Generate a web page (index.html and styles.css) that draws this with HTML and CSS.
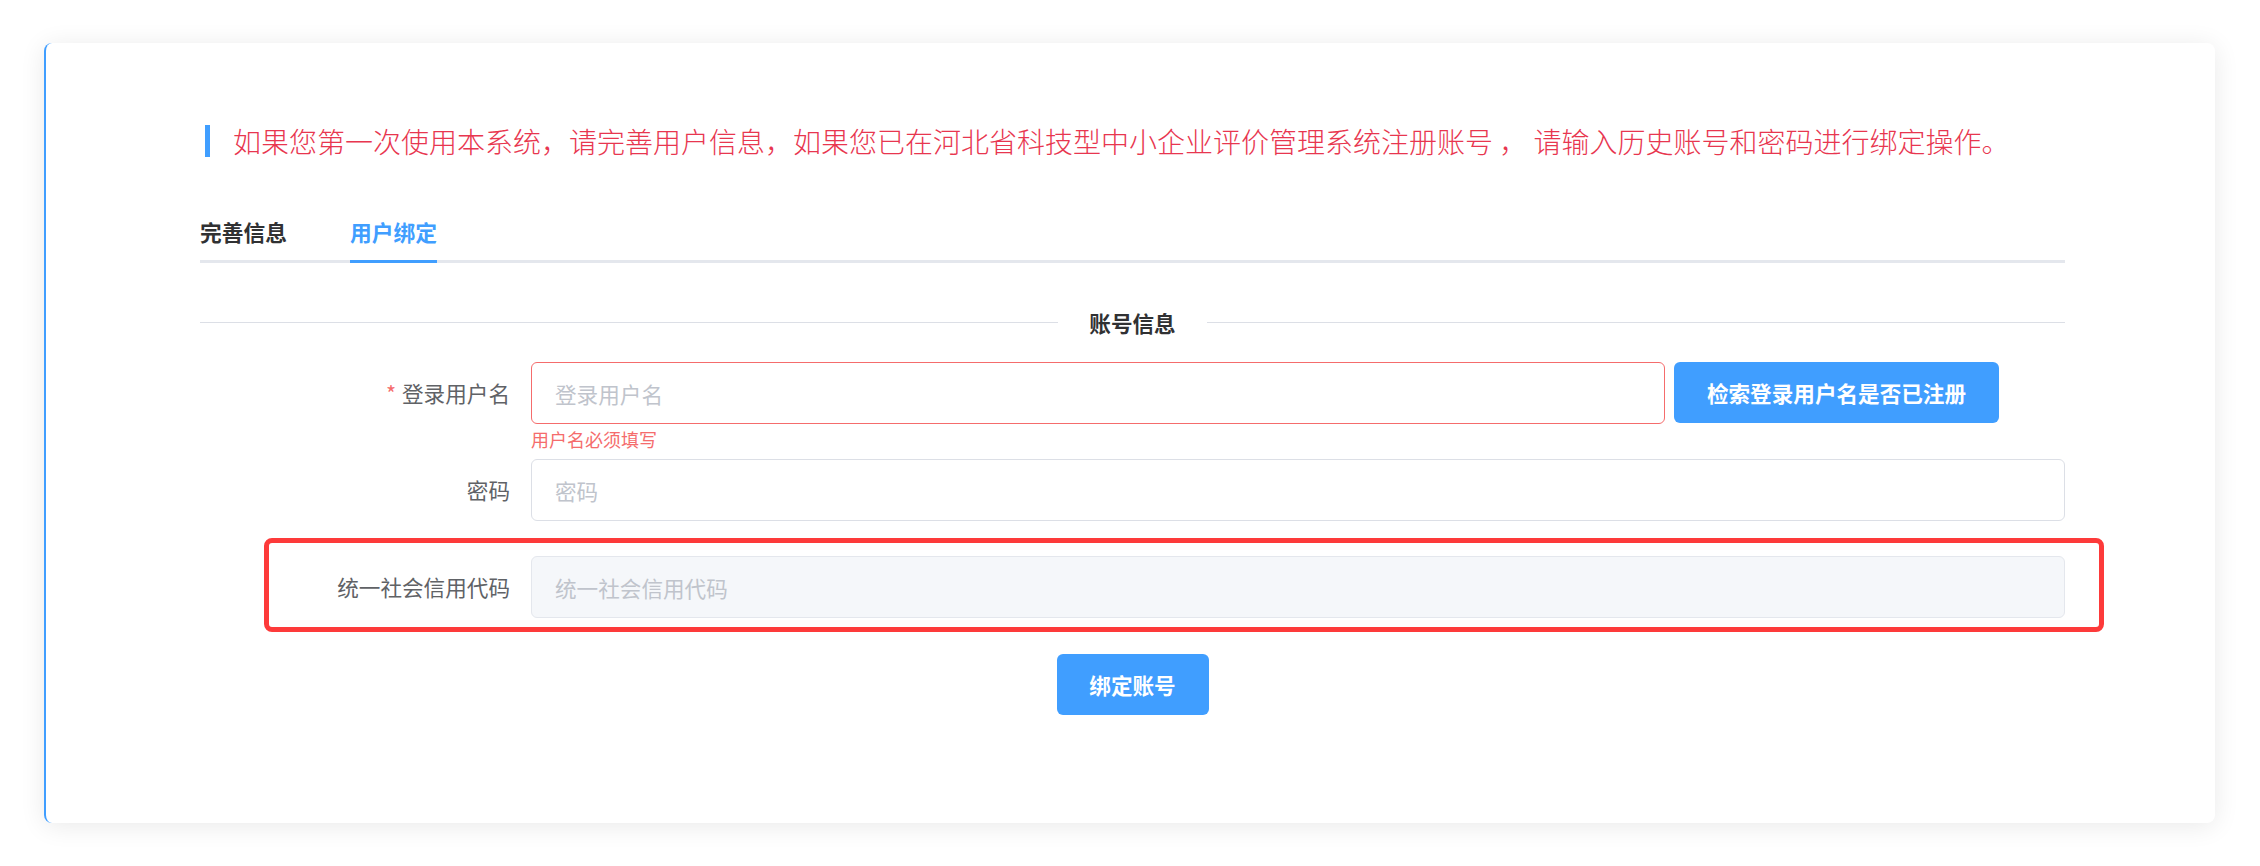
FILE: index.html
```html
<!DOCTYPE html>
<html lang="zh-CN">
<head>
<meta charset="utf-8">
<title>用户绑定</title>
<link rel="stylesheet" href="styles.css">
</head>
<body>
<div class="page">
  <div class="card">
    <div class="notice">
      <span class="notice-bar"></span>
      <span class="notice-text">如果您第一次使用本系统，请完善用户信息，如果您已在河北省科技型中小企业评价管理系统注册账号 ， 请输入历史账号和密码进行绑定操作。</span>
    </div>

    <div class="tabs">
      <div class="tab">完善信息</div>
      <div class="tab active">用户绑定</div>
    </div>

    <div class="divider"><span class="divider-text">账号信息</span></div>

    <form class="form">
      <div class="row row-first">
        <label class="label"><span class="req">*</span>登录用户名</label>
        <div class="content content-with-btn">
          <div class="field">
            <input class="input input-error" placeholder="登录用户名">
            <div class="error">用户名必须填写</div>
          </div>
          <button type="button" class="btn btn-search">检索登录用户名是否已注册</button>
        </div>
      </div>
      <div class="row">
        <label class="label">密码</label>
        <div class="content">
          <input class="input" type="password" placeholder="密码">
        </div>
      </div>
      <div class="row row-highlight">
        <label class="label">统一社会信用代码</label>
        <div class="content">
          <input class="input input-disabled" placeholder="统一社会信用代码" disabled>
        </div>
      </div>
      <div class="actions">
        <button type="button" class="btn btn-bind">绑定账号</button>
      </div>
    </form>
  </div>
</div>
</body>
</html>
```
FILE: styles.css
```css
html, body {
  margin: 0;
  padding: 0;
  background: #ffffff;
}

body {
  font-family: "Noto Sans CJK SC", "Noto Sans", "Liberation Sans", sans-serif;
  color: #303133;
}

.page {
  padding: 43px 45px 43px 44px;
}

.card {
  background: #ffffff;
  border-left: 2px solid #409eff;
  border-radius: 8px;
  box-shadow: 0 3px 26px rgba(0, 0, 0, 0.09);
  padding: 82px 150px 108px 154px;
  height: 780px;
  box-sizing: border-box;
}

/* notice */
.notice {
  display: flex;
  align-items: center;
  height: 32px;
  padding-left: 5px;
}

.notice-bar {
  width: 5px;
  height: 32px;
  background: #409eff;
  flex: none;
}

.notice-text {
  margin-left: 23px;
  font-family: "Noto Sans CJK SC Light", "Noto Sans CJK SC DemiLight", "Noto Sans CJK SC", sans-serif;
  font-size: 28px;
  font-weight: 300;
  line-height: 32px;
  color: #e8364f;
  white-space: nowrap;
}

/* tabs */
.tabs {
  margin-top: 46px;
  display: flex;
  border-bottom: 3px solid #e4e7ed;
  height: 57px;
}

.tab {
  font-size: 21.75px;
  font-weight: 700;
  line-height: 57px;
  height: 57px;
  color: #303133;
  margin-right: 63px;
  border-bottom: 3px solid transparent;
}

.tab.active {
  color: #409eff;
  border-bottom-color: #409eff;
}

/* divider */
.divider {
  margin-top: 59px;
  height: 1px;
  background: #dcdfe6;
  display: flex;
  justify-content: center;
  align-items: center;
}

.divider-text {
  background: #ffffff;
  padding: 0 31px;
  font-size: 21.6px;
  font-weight: 700;
  color: #303133;
  line-height: 30px;
}

/* form */
.form {
  margin-top: 39px;
}

.row {
  display: flex;
  margin-bottom: 35px;
}

.label {
  width: 331px;
  flex: none;
  box-sizing: border-box;
  padding-right: 21px;
  text-align: right;
  font-size: 21.6px;
  line-height: 62px;
  color: #606266;
}

.req {
  color: #f56c6c;
  margin-right: 6px;
}

.content {
  flex: 1;
  display: flex;
}

.content-with-btn {
  padding-right: 66px;
  gap: 9px;
}

.field {
  flex: 1;
  position: relative;
  display: flex;
}

.input {
  flex: 1;
  width: 100%;
  height: 62px;
  box-sizing: border-box;
  border: 1.5px solid #dcdfe6;
  border-radius: 6px;
  padding: 0 23px;
  font-family: "Noto Sans CJK SC", "Noto Sans", sans-serif;
  font-size: 21.6px;
  color: #606266;
  background: #ffffff;
  outline: none;
}

.input::placeholder {
  color: #c0c4cc;
}

.input-error {
  border-color: #f56c6c;
}

.input-disabled {
  background: #f5f7fa;
  border-color: #e4e7ed;
}

.error {
  position: absolute;
  left: 0;
  top: 100%;
  padding-top: 5px;
  font-size: 18px;
  line-height: 20px;
  color: #f56c6c;
}

.btn {
  font-family: "Noto Sans CJK SC", "Noto Sans", sans-serif;
  font-size: 21.6px;
  font-weight: 700;
  color: #ffffff;
  background: #409eff;
  border: none;
  border-radius: 6px;
  height: 61px;
  cursor: pointer;
}

.btn-search {
  flex: none;
  width: 325px;
  padding: 0;
}

.row-highlight {
  position: relative;
}

.row-highlight::after {
  content: "";
  position: absolute;
  left: 64px;
  right: -39px;
  top: -18px;
  bottom: -14px;
  border: 5px solid #fd3a3a;
  border-radius: 8px;
  pointer-events: none;
}

.actions {
  display: flex;
  justify-content: center;
  margin-top: 36px;
}

.btn-bind {
  width: 152px;
  padding: 0;
}
```
